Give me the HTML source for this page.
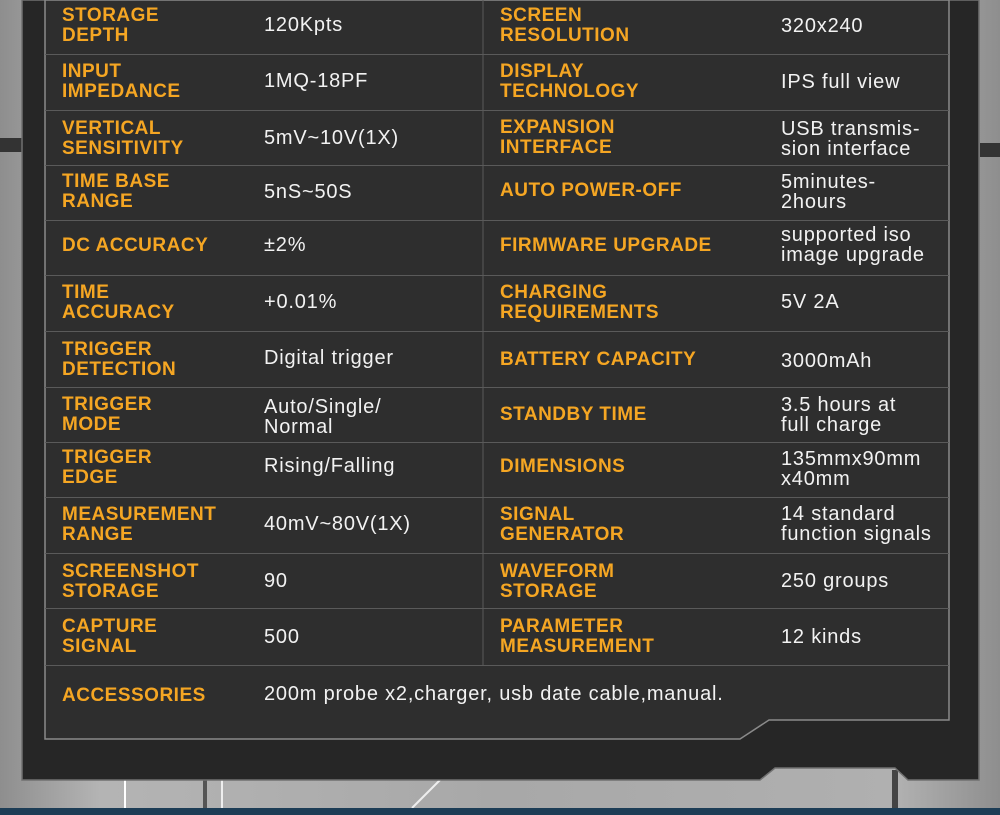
<!DOCTYPE html>
<html><head><meta charset="utf-8"><style>
html,body{margin:0;padding:0;width:1000px;height:815px;overflow:hidden;background:#a5a5a5;}
body{position:relative;font-family:"Liberation Sans",sans-serif;}
.bg{position:absolute;left:0;top:0;width:1000px;height:815px;background:linear-gradient(90deg,#8e8e8e,#b4b4b4 10%,#a8a8a8 50%,#b0b0b0 90%,#8e8e8e);}
.l{position:absolute;color:#f5a623;font-weight:bold;font-size:19px;line-height:20px;letter-spacing:0.5px;}
.v{position:absolute;color:#f2f2f2;font-size:20px;line-height:20px;letter-spacing:0.8px;}
.hl{position:absolute;left:45px;width:904px;height:1px;background:#5a5a5a;}
</style></head><body>
<div class="bg"></div>
<svg width="1000" height="815" style="position:absolute;left:0;top:0">
<line x1="125" y1="780" x2="125" y2="808" stroke="#fff" stroke-width="2"/>
<line x1="205" y1="780" x2="205" y2="808" stroke="#555" stroke-width="4"/>
<line x1="222" y1="780" x2="222" y2="808" stroke="#eee" stroke-width="2"/>
<line x1="440" y1="780" x2="412" y2="808" stroke="#eee" stroke-width="2"/>
<line x1="895" y1="770" x2="895" y2="808" stroke="#444" stroke-width="6"/>
<line x1="0" y1="145" x2="22" y2="145" stroke="#333" stroke-width="14"/>
<line x1="980" y1="150" x2="1000" y2="150" stroke="#333" stroke-width="14"/>
<polygon points="22,0 979,0 979,780 908,780 895,768 775,768 760,780 22,780" fill="#262626" stroke="#707070" stroke-width="1.5"/>
<polygon points="45,0 949,0 949,720 769,720 740,739 45,739" fill="#2e2e2e" stroke="#8a8a8a" stroke-width="1.5"/>
<line x1="483" y1="0" x2="483" y2="665" stroke="#5a5a5a"/>
<rect x="0" y="808" width="1000" height="7" fill="#1d3d56"/>
</svg>
<div class="hl" style="top:54px"></div><div class="hl" style="top:110px"></div><div class="hl" style="top:165px"></div><div class="hl" style="top:220px"></div><div class="hl" style="top:275px"></div><div class="hl" style="top:331px"></div><div class="hl" style="top:387px"></div><div class="hl" style="top:442px"></div><div class="hl" style="top:497px"></div><div class="hl" style="top:553px"></div><div class="hl" style="top:608px"></div><div class="hl" style="top:665px"></div>

<div class="l" style="left:62px;top:6px">STORAGE<br>DEPTH</div><div class="v" style="left:264px;top:15px">120Kpts</div>
<div class="l" style="left:500px;top:6px">SCREEN<br>RESOLUTION</div><div class="v" style="left:781px;top:16px">320x240</div>

<div class="l" style="left:62px;top:62px">INPUT<br>IMPEDANCE</div><div class="v" style="left:264px;top:71px">1MQ-18PF</div>
<div class="l" style="left:500px;top:62px">DISPLAY<br>TECHNOLOGY</div><div class="v" style="left:781px;top:72px">IPS full view</div>

<div class="l" style="left:62px;top:119px">VERTICAL<br>SENSITIVITY</div><div class="v" style="left:264px;top:128px">5mV~10V(1X)</div>
<div class="l" style="left:500px;top:118px">EXPANSION<br>INTERFACE</div><div class="v" style="left:781px;top:119px">USB transmis-<br>sion interface</div>

<div class="l" style="left:62px;top:172px">TIME BASE<br>RANGE</div><div class="v" style="left:264px;top:182px">5nS~50S</div>
<div class="l" style="left:500px;top:181px">AUTO POWER-OFF</div><div class="v" style="left:781px;top:172px">5minutes-<br>2hours</div>

<div class="l" style="left:62px;top:236px">DC ACCURACY</div><div class="v" style="left:264px;top:235px">±2%</div>
<div class="l" style="left:500px;top:236px">FIRMWARE UPGRADE</div><div class="v" style="left:781px;top:225px">supported iso<br>image upgrade</div>

<div class="l" style="left:62px;top:283px">TIME<br>ACCURACY</div><div class="v" style="left:264px;top:292px">+0.01%</div>
<div class="l" style="left:500px;top:283px">CHARGING<br>REQUIREMENTS</div><div class="v" style="left:781px;top:292px">5V 2A</div>

<div class="l" style="left:62px;top:340px">TRIGGER<br>DETECTION</div><div class="v" style="left:264px;top:348px">Digital trigger</div>
<div class="l" style="left:500px;top:350px">BATTERY CAPACITY</div><div class="v" style="left:781px;top:351px">3000mAh</div>

<div class="l" style="left:62px;top:395px">TRIGGER<br>MODE</div><div class="v" style="left:264px;top:397px">Auto/Single/<br>Normal</div>
<div class="l" style="left:500px;top:405px">STANDBY TIME</div><div class="v" style="left:781px;top:395px">3.5 hours at<br>full charge</div>

<div class="l" style="left:62px;top:448px">TRIGGER<br>EDGE</div><div class="v" style="left:264px;top:456px">Rising/Falling</div>
<div class="l" style="left:500px;top:457px">DIMENSIONS</div><div class="v" style="left:781px;top:449px">135mmx90mm<br>x40mm</div>

<div class="l" style="left:62px;top:505px">MEASUREMENT<br>RANGE</div><div class="v" style="left:264px;top:514px">40mV~80V(1X)</div>
<div class="l" style="left:500px;top:505px">SIGNAL<br>GENERATOR</div><div class="v" style="left:781px;top:504px">14 standard<br>function signals</div>

<div class="l" style="left:62px;top:562px">SCREENSHOT<br>STORAGE</div><div class="v" style="left:264px;top:571px">90</div>
<div class="l" style="left:500px;top:562px">WAVEFORM<br>STORAGE</div><div class="v" style="left:781px;top:571px">250 groups</div>

<div class="l" style="left:62px;top:617px">CAPTURE<br>SIGNAL</div><div class="v" style="left:264px;top:627px">500</div>
<div class="l" style="left:500px;top:617px">PARAMETER<br>MEASUREMENT</div><div class="v" style="left:781px;top:627px">12 kinds</div>

<div class="l" style="left:62px;top:686px">ACCESSORIES</div><div class="v" style="left:264px;top:684px">200m probe x2,charger, usb date cable,manual.</div>
</body></html>
